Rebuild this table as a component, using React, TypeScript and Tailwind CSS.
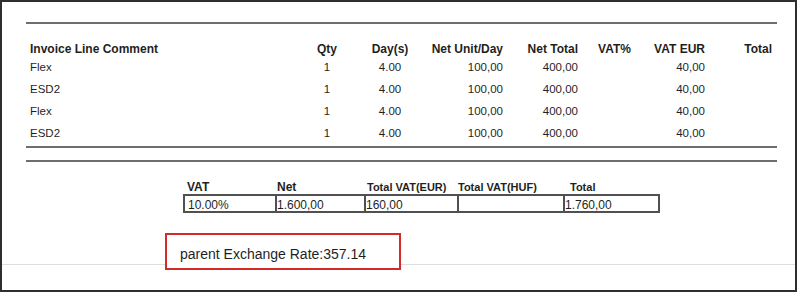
import React from "react";

const lines = [
  { comment: "Flex", qty: "1", days: "4.00", unit: "100,00", net: "400,00", vatPct: "", vatEur: "40,00", total: "" },
  { comment: "ESD2", qty: "1", days: "4.00", unit: "100,00", net: "400,00", vatPct: "", vatEur: "40,00", total: "" },
  { comment: "Flex", qty: "1", days: "4.00", unit: "100,00", net: "400,00", vatPct: "", vatEur: "40,00", total: "" },
  { comment: "ESD2", qty: "1", days: "4.00", unit: "100,00", net: "400,00", vatPct: "", vatEur: "40,00", total: "" },
];

const cols = "grid grid-cols-[274px_46px_80px_73px_75px_53px_74px_67px]";
const sumCols = "grid grid-cols-[92px_89px_93px_106px_97px]";

export default function App() {
  return (
    <div className="w-[798px] h-[293px] bg-white">
      <div className="w-[797px] h-[292px] border-2 border-[#2e2e2e] flex flex-col font-['Liberation_Sans',Arial,sans-serif] text-[#1f1f1f]">

        {/* Invoice lines */}
        <div className="pt-[20px] pl-[24px] pr-[18px]">
          <div className="h-[2px] bg-[#6e6e6e]" />

          <div className={`${cols} mt-[17px] pl-[4px] h-[16px] items-center text-[12px] font-bold leading-none`}>
            <div>Invoice Line Comment</div>
            <div className="text-center">Qty</div>
            <div className="text-center">Day(s)</div>
            <div className="text-right">Net Unit/Day</div>
            <div className="text-right">Net Total</div>
            <div className="text-right">VAT%</div>
            <div className="text-right">VAT EUR</div>
            <div className="text-right">Total</div>
          </div>

          {lines.map((l, i) => (
            <div key={i} className={`${cols} pl-[4px] h-[22px] items-center text-[11.5px] leading-none`}>
              <div>{l.comment}</div>
              <div className="text-center">{l.qty}</div>
              <div className="text-center">{l.days}</div>
              <div className="text-right">{l.unit}</div>
              <div className="text-right">{l.net}</div>
              <div className="text-right">{l.vatPct}</div>
              <div className="text-right">{l.vatEur}</div>
              <div className="text-right">{l.total}</div>
            </div>
          ))}

          <div className="mt-[1px] h-[2px] bg-[#6e6e6e]" />
          <div className="mt-[12px] h-[2px] bg-[#6e6e6e]" />
        </div>

        {/* VAT summary */}
        <div className="ml-[181px] mt-[16px]">
          <div className={`${sumCols} h-[16px] items-end font-bold leading-[13px]`}>
            <div className="pl-[4px] text-[12px]">VAT</div>
            <div className="pl-[2px] text-[12px]">Net</div>
            <div className="pl-[3px] text-[11px]">Total VAT(EUR)</div>
            <div className="pl-[1px] text-[11px]">Total VAT(HUF)</div>
            <div className="pl-[7px] text-[11px]">Total</div>
          </div>
          <div className={`${sumCols} h-[19px] text-[12px] leading-none`}>
            {["10.00%", "1.600,00", "160,00", "", "1.760,00"].map((v, i) => (
              <div
                key={i}
                className={`flex items-center pt-[3px] border-y-2 border-l-2 border-[#505050] ${i === 0 ? "pl-[3px]" : "pl-0"} ${i === 4 ? "border-r-2" : ""}`}
              >
                {v}
              </div>
            ))}
          </div>
        </div>

        {/* Exchange rate note */}
        <div className="mt-[20px] border-b border-[#dedede]">
          <div className="relative z-10 ml-[163px] mb-[-6px] w-[236px] h-[37px] border-2 border-[#d32a2a] bg-white flex items-center pl-[13px] pt-[4px] text-[14px] leading-none">
            parent Exchange Rate:357.14
          </div>
        </div>
      </div>
    </div>
  );
}
